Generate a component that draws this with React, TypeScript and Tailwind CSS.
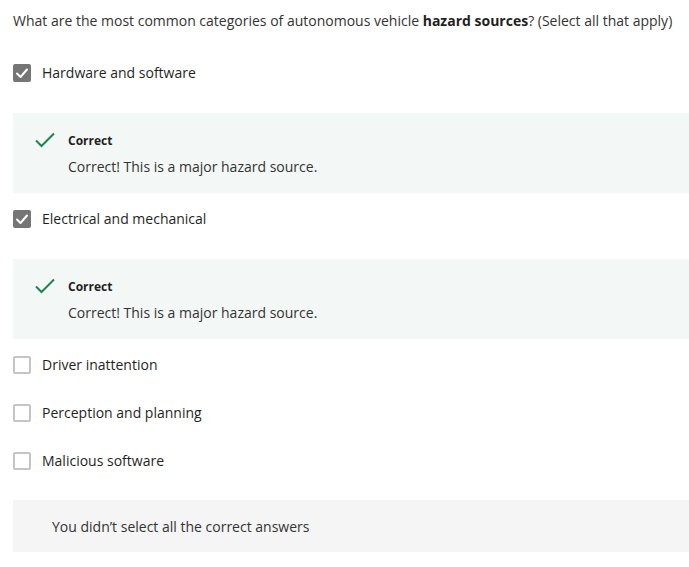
import React from "react";

type Option = {
  label: string;
  checked: boolean;
  feedback?: string;
};

const options: Option[] = [
  { label: "Hardware and software", checked: true, feedback: "Correct! This is a major hazard source." },
  { label: "Electrical and mechanical", checked: true, feedback: "Correct! This is a major hazard source." },
  { label: "Driver inattention", checked: false },
  { label: "Perception and planning", checked: false },
  { label: "Malicious software", checked: false },
];

function Checkbox({ checked }: { checked: boolean }) {
  if (checked) {
    return (
      <span className="flex h-[18px] w-[18px] shrink-0 items-center justify-center rounded-[2px] bg-[#757575]">
        <svg width="14" height="14" viewBox="0 0 14 14" fill="none">
          <polyline points="2,7.5 5.5,11 12,3.5" stroke="#fff" strokeWidth="2" strokeLinecap="round" strokeLinejoin="round" />
        </svg>
      </span>
    );
  }
  return <span className="h-[18px] w-[18px] shrink-0 rounded-[2px] border-2 border-[#c4c4c4] bg-white" />;
}

function Feedback({ text }: { text: string }) {
  return (
    <div className="mt-[17px] mb-px flex gap-[13px] bg-[#f3f8f6] pl-[22px] pt-[19px] pb-[16px]">
      <svg className="shrink-0" width="20" height="16" viewBox="0 0 20 16" fill="none">
        <polyline points="1,8.5 6.5,14 19,1.5" stroke="#1f8354" strokeWidth="2" />
      </svg>
      <div>
        <p className="text-[12px] font-bold leading-[18px] text-[#1f1f1f]">Correct</p>
        <p className="mt-[7px] text-[14px] leading-[20px] text-[#333]">{text}</p>
      </div>
    </div>
  );
}

export default function App() {
  return (
    <div className="min-h-screen bg-white pl-[13px] pt-[11px] font-['Open_Sans',sans-serif] text-[#333]">
      <p className="mb-[17px] text-[14px] leading-[20px]">
        What are the most common categories of autonomous vehicle <b className="font-bold text-[#1f1f1f]">hazard sources</b>? (Select all that apply)
      </p>
      {options.map((o) => (
        <div key={o.label}>
          <div className="flex h-12 items-center gap-[11px] pt-[2px]">
            <Checkbox checked={o.checked} />
            <span className="text-[14px] leading-[20px] text-[#1f1f1f]">{o.label}</span>
          </div>
          {o.feedback && <Feedback text={o.feedback} />}
        </div>
      ))}
      <div className="mt-4 flex h-[52px] items-center bg-[#f5f5f5] pl-[39px] text-[14px] text-[#333]">
        You didn’t select all the correct answers
      </div>
    </div>
  );
}
